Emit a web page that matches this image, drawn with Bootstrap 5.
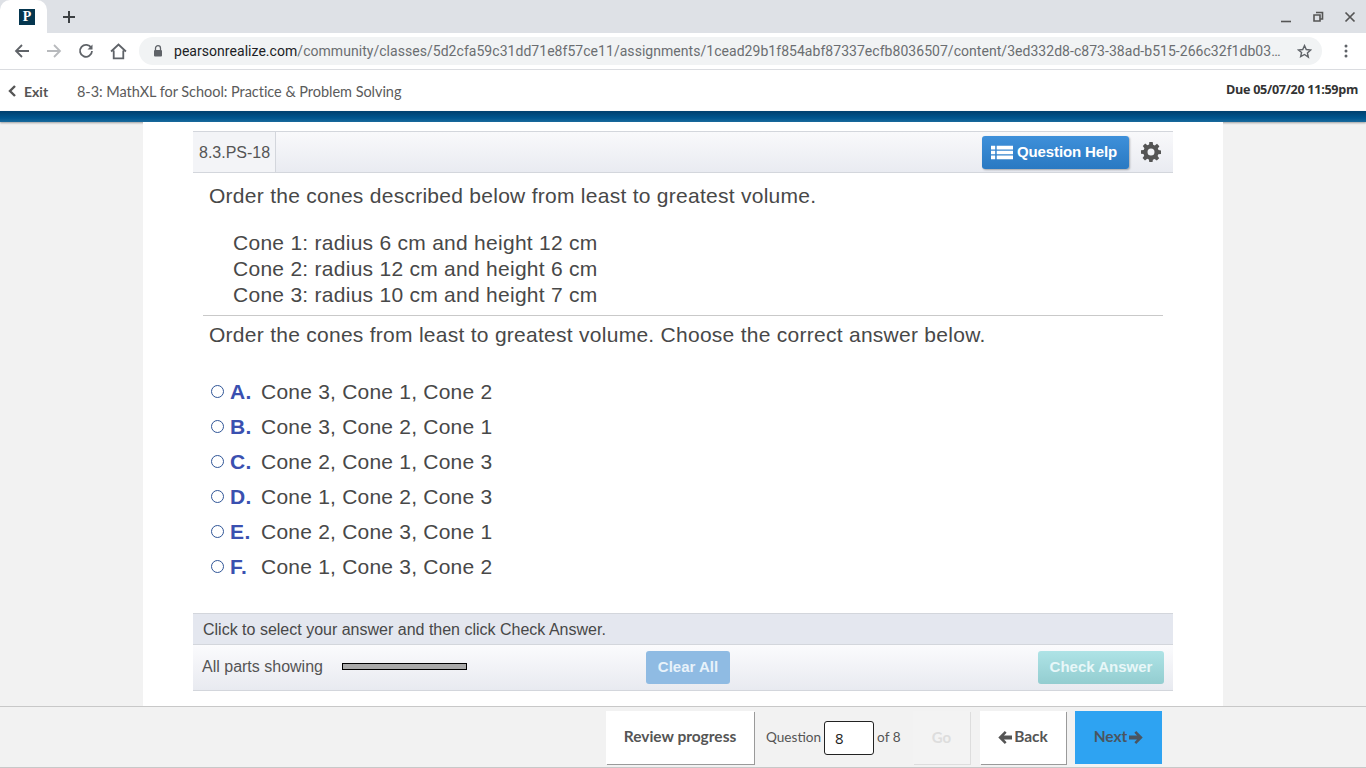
<!DOCTYPE html>
<html lang="en">
<head>
<meta charset="utf-8">
<title>8-3: MathXL for School</title>
<link href="https://cdn.jsdelivr.net/npm/bootstrap@5.3.0/dist/css/bootstrap.min.css" rel="stylesheet">
<style>
html,body{height:768px;overflow:hidden}
body{background:#f2f2f2;font-family:"Liberation Sans",Arial,sans-serif;color:#484848}
.tabstrip{height:33px;background:#dee1e6}
.tabshape{width:47px;height:33px;margin-left:0;background:#fff;border-radius:10px 10px 0 0;padding-left:7px}
.favi{width:16px;height:16px;background:#05364f;color:#fff;font:700 14px/16px "Liberation Serif",serif;text-align:center}
.newtab{width:44px;height:33px}
.winbtn{width:32px;height:33px}
.toolbar{height:37px;background:#fff;border-bottom:1px solid #dadce0;padding-left:6px;font-family:Roboto,sans-serif}
.navico{width:32px;height:28px}
.urlbar{width:1183px;height:28px;background:#f1f3f4;border-radius:14px;margin-left:5px;font-size:14px;letter-spacing:.04px;color:#6b6e71;white-space:nowrap;overflow:hidden}
.urlhost{color:#202124}
.lockbox{width:35px;padding-left:3px}
.starbox{width:36px}
.urltext{width:1110px;overflow:hidden}
.apphead{height:41px;background:#fff;font-family:Lato,sans-serif;color:#555}
.exitlink{font-weight:700;font-size:14px;color:#555;width:77px;padding-left:8px;padding-top:1px;gap:7px}
.apptitle{font-size:14.5px;letter-spacing:-.04px;color:#5b5b5b;padding-top:2px}
.duedate{font-size:12.6px;font-weight:700;color:#333;padding-right:8px;font-family:"Open Sans",Lato,sans-serif;letter-spacing:-.3px}
.bluebar{height:11px;background:linear-gradient(#003f6e,#00568f 65%,#1a6a9c);box-shadow:0 1px 2px rgba(0,0,0,.35)}
.sheet{width:1080px;height:584px;margin:0 auto;background:#fff;padding:9px 50px 0}
.qbar{height:42px;border:solid #d3d6dc;border-width:1px 0;background:linear-gradient(#f9f9fb,#e9ebf1);padding-right:12px}
.qid{height:100%;padding:0 5px 0 6px;border-right:1px solid #d3d6dc;font-size:16px;line-height:42px;color:#555;background:#f3f4f7}
.helpbtn{height:33px;width:147px;border:0;border-radius:3px;background:linear-gradient(#3e90da,#2a79c2);color:#fff;font-weight:700;font-size:15px;letter-spacing:-.12px;box-shadow:1px 1px 2px rgba(0,0,0,.3);padding:0 0 0 9px;gap:4px;margin-right:12px}
.helpbtn:hover{color:#fff}
.qtext{font-size:21px;line-height:26px;letter-spacing:.27px;color:#484848}
.q1{padding:10px 0 0 16px;height:46px}
.conelist{padding:11px 0 0 40px;height:96px;margin-bottom:0}
.conelist p{margin:0}
.rulebox{border-top:1px solid #c9c9c9;margin:0 10px}
.q2{padding:6px 0 0 16px;height:58px}
.optrow{height:35px;font-size:21px;letter-spacing:.22px;padding-left:18px}
.optdot{width:13px;height:13px;border:1.3px solid #2f5597;border-radius:50%;margin-right:6px;background:#fff;flex:none;margin-top:-1px}
.optlet{width:31px;font-weight:700;color:#3a50b0;letter-spacing:.4px}
.hintbar{height:32px;margin-top:29px;background:#e4e7ef;border:solid #d3d6dc;border-width:1px 0;padding-left:10px;font-size:16px;line-height:32px;color:#484848}
.actbar{height:46px;border-bottom:1px solid #d3d6dc;background:linear-gradient(#fbfbfd,#e8eaf0);padding:0 9px}
.partlab{font-size:16px;width:140px;color:#555;padding-bottom:2px}
.partbar{width:125px;height:7px;border:1px solid #000;background:#aaa;margin-top:-2px}
.clearbtn{width:84px;height:33px;margin-left:179px;background:#8fbbe3;border:0;border-radius:3px;color:#e8f2fa;font-weight:700;font-size:15px;padding:0}
.checkbtn{width:126px;height:33px;margin-left:auto;background:linear-gradient(#aee3e6,#93cdd0);border:0;border-radius:3px;color:#e8f7f8;font-weight:700;font-size:15px;padding:0}
.footbar{height:62px;background:#f2f2f2;border-top:1px solid #c8c8c8;border-bottom:1px solid #c8c8c8;font-family:Lato,sans-serif;padding:4px 0 0 606px;align-items:flex-start}
.footbtn{border:0;border-radius:0;font-weight:700;font-size:15.5px;color:#555;background:#fff;padding:0 0 1px;box-shadow:1px 1px 0 #9a9a9a;height:53px}
.rvbtn{width:148px}
.qgroup{width:159px;font-size:13.6px;color:#555;padding-left:12px;height:53px;padding-bottom:1px}
.qnum{width:50px;height:34px;border:1px solid #222;border-radius:3px;background:#fff;margin:2px 3px 0;padding:0 10px;font:15px "Open Sans",sans-serif;color:#222;line-height:32px}
.gobtn{width:57px;background:#f3f3f3;color:#ddd;box-shadow:1px 1px 0 #ddd;margin-right:10px;font-size:15px;font-weight:700}
.backbtn{width:86px;margin-right:9px;gap:2px}
.nextbtn{width:87px;background:#2ea3f2;gap:2px;color:#4a5560;box-shadow:none}
</style>
</head>
<body>
<div class="tabstrip d-flex align-items-center">
  <div class="tabshape d-flex align-items-center justify-content-center"><div class="favi">P</div></div>
  <div class="newtab d-flex align-items-center justify-content-center">
    <svg width="14" height="14" viewBox="0 0 14 14"><path d="M7 1v12M1 7h12" stroke="#3c4043" stroke-width="2"/></svg>
  </div>
  <div class="d-flex ms-auto">
    <div class="winbtn d-flex align-items-center justify-content-center"><svg width="12" height="12" viewBox="0 0 12 12"><path d="M1 10.500h10" stroke="#555" stroke-width="1.600"/></svg></div>
    <div class="winbtn d-flex align-items-center justify-content-center"><svg width="12" height="12" viewBox="0 0 12 12"><path d="M4 1.500h6.500v6.500h-2M2 4h6v6h-6z" fill="none" stroke="#555" stroke-width="1.600"/></svg></div>
    <div class="winbtn d-flex align-items-center justify-content-center"><svg width="12" height="12" viewBox="0 0 12 12"><path d="M1.500 1.500l9 9M10.500 1.500l-9 9" stroke="#555" stroke-width="1.700"/></svg></div>
  </div>
</div>
<div class="toolbar d-flex align-items-center">
  <div class="navico d-flex align-items-center justify-content-center"><svg width="16" height="16" viewBox="0 0 16 16"><path d="M15 8H2M8 2L2 8l6 6" fill="none" stroke="#5f6368" stroke-width="1.800"/></svg></div>
  <div class="navico d-flex align-items-center justify-content-center"><svg width="16" height="16" viewBox="0 0 16 16"><path d="M1 8h13M8 2l6 6-6 6" fill="none" stroke="#b8babd" stroke-width="1.800"/></svg></div>
  <div class="navico d-flex align-items-center justify-content-center"><svg width="16" height="16" viewBox="0 0 16 16"><path d="M13.300 5A6 6 0 1 0 14 8" fill="none" stroke="#5f6368" stroke-width="1.800"/><path d="M14.500 1.500v5h-5z" fill="#5f6368"/></svg></div>
  <div class="navico d-flex align-items-center justify-content-center"><svg width="17" height="17" viewBox="0 0 16 16"><path d="M1 8l7-6.500L15 8M3.500 7v7.500h9V7" fill="none" stroke="#5f6368" stroke-width="1.700"/></svg></div>
  <div class="urlbar d-flex align-items-center">
    <div class="lockbox d-flex justify-content-center"><svg width="10" height="12" viewBox="0 0 10 12"><path d="M2.500 5V3.200a2.500 2.500 0 0 1 5 0V5" fill="none" stroke="#5f6368" stroke-width="1.300"/><rect x="1" y="5" width="8" height="6.500" rx="1" fill="#5f6368"/></svg></div>
    <div class="urltext"><span class="urlhost">pearsonrealize.com</span>/community/classes/5d2cfa59c31dd71e8f57ce11/assignments/1cead29b1f854abf87337ecfb8036507/content/3ed332d8-c873-38ad-b515-266c32f1db03…</div>
    <div class="starbox d-flex justify-content-center ms-auto"><svg width="15" height="15" viewBox="0 0 16 16"><path d="M8 1.700l1.900 4.200 4.600.5-3.400 3.100 1 4.500L8 11.200 3.900 13.500l1-4.500L1.500 6.400l4.600-.5z" fill="none" stroke="#5f6368" stroke-width="1.500"/></svg></div>
  </div>
  <div class="navico d-flex align-items-center justify-content-center ms-2"><svg width="4" height="14" viewBox="0 0 4 14"><circle cx="2" cy="2" r="1.500" fill="#5f6368"/><circle cx="2" cy="7" r="1.500" fill="#5f6368"/><circle cx="2" cy="12" r="1.500" fill="#5f6368"/></svg></div>
</div>
<div class="apphead d-flex align-items-center">
  <div class="exitlink d-flex align-items-center"><svg width="9" height="12" viewBox="0 0 9 12"><path d="M7 1L2 6l5 5" fill="none" stroke="#555" stroke-width="2.400"/></svg><span>Exit</span></div>
  <div class="apptitle">8-3: MathXL for School: Practice &amp; Problem Solving</div>
  <div class="duedate ms-auto">Due 05/07/20 11:59pm</div>
</div>
<div class="bluebar"></div>
<div class="sheet">
  <div class="qbar d-flex align-items-center">
    <div class="qid">8.3.PS-18</div>
    <button class="btn helpbtn d-flex align-items-center justify-content-start ms-auto" type="button">
      <svg width="22" height="15" viewBox="0 0 22 15"><path d="M0 .8h4.200v3.600H0zM0 5.700h4.200v3.600H0zM0 10.600h4.200v3.600H0zM5.700.8h16.300v3.600H5.700zM5.700 5.700h16.300v3.600H5.700zM5.700 10.600h16.300v3.600H5.700z" fill="#fff"/></svg>
      <span>Question Help</span>
    </button>
    <svg width="20" height="20" viewBox="0 0 20 20"><path fill="#555" fill-rule="evenodd" d="M8.300 0h3.400l.4 2.700 1.700.7 2.200-1.600 2.400 2.400-1.600 2.200.7 1.700 2.500.4v3.400l-2.700.4-.7 1.700 1.600 2.200-2.400 2.400-2.200-1.600-1.700.7-.4 2.500H8.300l-.4-2.700-1.700-.7-2.200 1.600-2.400-2.400 1.600-2.200-.7-1.700L0 11.700V8.300l2.700-.4.700-1.700-1.600-2.200 2.400-2.400 2.200 1.600 1.700-.7zM10 6.500a3.500 3.500 0 1 0 0 7 3.500 3.500 0 0 0 0-7z"/></svg>
  </div>
  <div class="qtext q1">Order the cones described below from least to greatest volume.</div>
  <div class="qtext conelist">
    <p>Cone 1: radius 6 cm and height 12 cm</p>
    <p>Cone 2: radius 12 cm and height 6 cm</p>
    <p>Cone 3: radius 10 cm and height 7 cm</p>
  </div>
  <div class="rulebox"></div>
  <div class="qtext q2">Order the cones from least to greatest volume. Choose the correct answer below.</div>
  <div class="optrow d-flex align-items-center"><span class="optdot"></span><span class="optlet">A.</span><span>Cone 3, Cone 1, Cone 2</span></div>
  <div class="optrow d-flex align-items-center"><span class="optdot"></span><span class="optlet">B.</span><span>Cone 3, Cone 2, Cone 1</span></div>
  <div class="optrow d-flex align-items-center"><span class="optdot"></span><span class="optlet">C.</span><span>Cone 2, Cone 1, Cone 3</span></div>
  <div class="optrow d-flex align-items-center"><span class="optdot"></span><span class="optlet">D.</span><span>Cone 1, Cone 2, Cone 3</span></div>
  <div class="optrow d-flex align-items-center"><span class="optdot"></span><span class="optlet">E.</span><span>Cone 2, Cone 3, Cone 1</span></div>
  <div class="optrow d-flex align-items-center"><span class="optdot"></span><span class="optlet">F.</span><span>Cone 1, Cone 3, Cone 2</span></div>
  <div class="hintbar">Click to select your answer and then click Check Answer.</div>
  <div class="actbar d-flex align-items-center">
    <div class="partlab">All parts showing</div>
    <div class="partbar"></div>
    <button class="btn clearbtn" type="button">Clear All</button>
    <button class="btn checkbtn" type="button">Check Answer</button>
  </div>
</div>
<div class="footbar d-flex">
  <button class="btn footbtn rvbtn" type="button">Review progress</button>
  <div class="qgroup d-flex align-items-center"><span>Question</span><span class="qnum">8</span><span>of 8</span></div>
  <button class="btn footbtn gobtn" type="button">Go</button>
  <button class="btn footbtn backbtn d-flex align-items-center justify-content-center" type="button">
    <svg width="14" height="13" viewBox="0 0 14 13"><path d="M6.800 0l1.800 1.800L6 4.500h8v4H6l2.600 2.700L6.800 13 .3 6.500z" fill="#555"/></svg><span>Back</span>
  </button>
  <button class="btn footbtn nextbtn d-flex align-items-center justify-content-center" type="button">
    <span>Next</span><svg width="14" height="13" viewBox="0 0 14 13"><path d="M7.200 0L5.400 1.800 8 4.500H0v4h8l-2.600 2.700L7.200 13l6.500-6.500z" fill="#4a5560"/></svg>
  </button>
</div>
</body>
</html>
